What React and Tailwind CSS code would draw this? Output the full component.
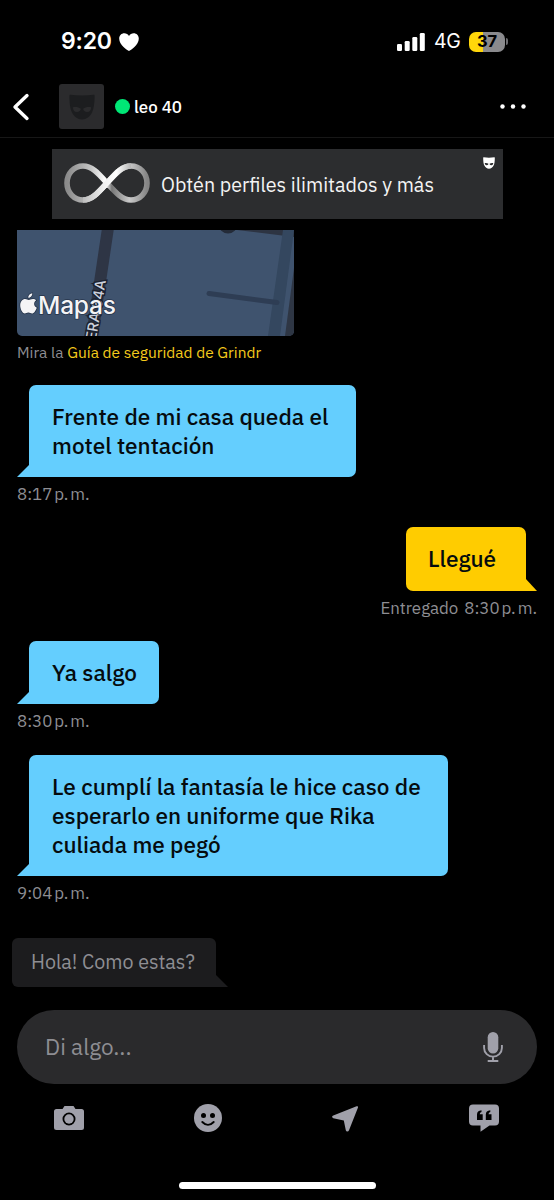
import React, { useState } from 'react'

const MESSAGES = [
  { id: 1, mine: false, lines: ['Frente de mi casa queda el', 'motel tentación'], time: '8:17\u202fp.\u202fm.', box: 'w-[327px] h-[91.5px]', slot: 'h-[142px]' },
  { id: 2, mine: true, lines: ['Llegué'], time: '8:30\u202fp.\u202fm.', status: 'Entregado', box: 'w-[120px] h-[63.5px]', slot: 'h-[114px]' },
  { id: 3, mine: false, lines: ['Ya salgo'], time: '8:30\u202fp.\u202fm.', box: 'w-[130px] h-[63px]', slot: 'h-[114px]' },
  { id: 4, mine: false, lines: ['Le cumplí la fantasía le hice caso de', 'esperarlo en uniforme que Rika', 'culiada me pegó'], time: '9:04\u202fp.\u202fm.', box: 'w-[419px] h-[121px]', slot: 'h-[150px]' },
]

function Mask({ className }) {
  return (
    <svg viewBox="0 0 26 26" className={className} fill="currentColor">
      <path
        fillRule="evenodd"
        d="M1.4.8Q13 2.400 24.6.8 25.6.6 25.6 2C25.6 9 24.8 15 23 18.5 21 22.500 17.500 25.500 13 25.500S5 22.500 3 18.500C1.200 15 .4 9 .4 2Q.4.6 1.400.8ZM3.800 13.200C4.300 17 6 18.300 8.400 17.900 10.800 17.500 11.600 16.500 11.800 14.800 9.600 13 7 12.500 3.800 13.200ZM22.200 13.200C19 12.500 16.400 13 14.200 14.800 14.400 16.500 15.200 17.500 17.600 17.900 20 18.300 21.700 17 22.200 13.200Z"
      />
    </svg>
  )
}

function StatusBar() {
  return (
    <div className="flex h-[80px] items-center pt-[3px] pl-[61px] pr-[46px] font-['Inter',sans-serif] text-white">
      <span className="w-[58px] text-[23px] font-semibold tracking-[-0.2px]">9:20</span>
      <svg viewBox="0 0 20 18" className="h-[18px] w-[20px]" fill="currentColor">
        <path d="M10 18C8.500 17.300.2 11.800.2 5.700.2 2.400 2.500.2 5.300.2 7.300.2 9 1.200 10 3 11 1.200 12.700.2 14.700.2c2.800 0 5.100 2.200 5.100 5.500C19.800 11.800 11.500 17.300 10 18Z" />
      </svg>
      <div className="ml-auto flex items-center">
        <svg viewBox="0 0 28 18" className="h-[18px] w-[28px]" fill="currentColor">
          <rect x="0" y="11" width="5" height="7" rx="1.300" />
          <rect x="7.700" y="8" width="5" height="10" rx="1.300" />
          <rect x="15.300" y="4" width="5" height="14" rx="1.300" />
          <rect x="22.800" y="0" width="5" height="18" rx="1.300" />
        </svg>
        <span className="ml-[9px] w-[35px] text-[19.5px] tracking-[-0.3px]">4G</span>
        <div className="flex h-[20px] w-[36px] items-center justify-center rounded-[7px] bg-[linear-gradient(90deg,#ffd60a_39%,#8a8a8d_39%)] text-[16.5px] font-bold text-black">
          37
        </div>
        <div className="ml-px h-[7px] w-[2px] rounded-r-full bg-[#6c6c70]" />
      </div>
    </div>
  )
}

function Header() {
  return (
    <header className="flex h-[58px] items-center border-b border-[#171717] pb-[4px] text-white">
      <svg viewBox="0 0 18 28" className="ml-[12px] h-[28px] w-[18px]" fill="none" stroke="currentColor" strokeWidth="3.400" strokeLinecap="round" strokeLinejoin="round">
        <path d="M15 2.600 3 14 15 25.400" />
      </svg>
      <div className="ml-[29px] flex h-[45px] w-[45px] items-center justify-center rounded-[3px] bg-[#2b2b2d]">
        <Mask className="h-[26px] w-[26px] text-[#1c1d1f]" />
      </div>
      <span className="ml-[11px] h-[15px] w-[15px] rounded-full bg-[#00e676]" />
      <span className="mt-[2px] ml-[4px] text-[16.9px] font-medium">leo 40</span>
      <svg viewBox="0 0 28 6" className="ml-auto mr-[27px] h-[6px] w-[28px]" fill="currentColor">
        <circle cx="3.500" cy="2.500" r="2.200" />
        <circle cx="14" cy="2.500" r="2.200" />
        <circle cx="24.500" cy="2.500" r="2.200" />
      </svg>
    </header>
  )
}

function Banner() {
  return (
    <div className="mt-[11px] ml-[52px] flex h-[70px] w-[451px] bg-[#2c2d2f]">
      <svg viewBox="0 0 86 40" className="mt-[14px] ml-[12px] h-[40px] w-[86px]" fill="none" strokeWidth="5.600">
        <defs>
          <linearGradient id="under" x1="0" x2="1">
            <stop offset="0" stopColor="#8b8b8b" />
            <stop offset="0.300" stopColor="#c4c4c4" />
            <stop offset="0.480" stopColor="#ffffff" />
            <stop offset="0.560" stopColor="#777777" />
            <stop offset="0.780" stopColor="#c9c9c9" />
            <stop offset="1" stopColor="#858585" />
          </linearGradient>
          <linearGradient id="over" x1="0" x2="1">
            <stop offset="0" stopColor="#bdbdbd" />
            <stop offset="0.450" stopColor="#f2f2f2" />
            <stop offset="0.700" stopColor="#ffffff" />
            <stop offset="1" stopColor="#b5b5b5" />
          </linearGradient>
        </defs>
        <path stroke="url(#under)" d="M43 20C34 10 28 3 19 3 10 3 3 10.500 3 20s7 17 16 17c9 0 15-7 24-17S58 3 67 3s16 7.500 16 17-7 17-16 17c-9 0-15-7-24-17Z" />
        <path stroke="url(#over)" d="M19 37c9 0 15-7 24-17S58 3 67 3" />
      </svg>
      <span className="ml-[11px] mt-px self-center whitespace-nowrap text-[19.7px] leading-[24px] text-[#f4f4f4]">Obtén perfiles ilimitados y más</span>
      <Mask className="ml-auto mt-[8px] mr-[8px] h-[12px] w-[12px] text-white" />
    </div>
  )
}

function MapPreview() {
  return (
    <div className="relative mt-[11px] ml-[17px] h-[106px] w-[277px] overflow-hidden rounded-b-[5px] bg-[#3f536e]">
      <svg viewBox="0 0 277 106" className="h-full w-full">
        <path d="M85-2H97L81 106H69Z" fill="#2e3545" />
        <path d="M220 0 277 7V0Z" fill="#2d3442" />
        <circle cx="211" cy="-6" r="9.500" fill="#242b38" />
        <path d="M266 0H277L263 106H251Z" fill="#34475f" />
        <path d="M192 63.500 260 72.500" stroke="#2e3d54" strokeWidth="5" strokeLinecap="round" />
        <path d="M277 38V106H268Z" fill="#2e3644" />
        <text x="0" y="0" transform="translate(78.700 111) rotate(-80.300)" fontFamily="Inter, sans-serif" fontSize="14.500" fontWeight="500" fill="#cbd0dc" stroke="#1c2230" strokeWidth="3" paintOrder="stroke">ERA 64A</text>
      </svg>
      <div className="absolute top-[61px] left-[3px] flex items-center">
        <svg viewBox="0 0 17 21" className="h-[21px] w-[17px] -mt-[4px] overflow-visible" fill="#f4f4f6" stroke="#26344a" strokeWidth="1.500" paintOrder="stroke">
          <path d="M12.300.2c.1 2.500-1.800 4.600-4 4.600C8 2.500 10 .4 12.300.2ZM16.200 7.300c-3 1.800-2.600 6.100.6 7.400C15.800 17.500 14 20.500 12 20.500c-1.500 0-1.900-.9-3.600-.9s-2.200.9-3.600.9C2.300 20.500.2 16 .2 12.300c0-3.800 2.300-6.300 5-6.300 1.500 0 2.500.9 3.600.9 1 0 2.200-1 4.100-1 1.200 0 2.500.5 3.300 1.400Z" />
        </svg>
        <span className="ml-[1px] font-['Inter',sans-serif] text-[24.5px] leading-[28px] font-medium tracking-[-0.2px] text-[#f4f4f6] [paint-order:stroke] [-webkit-text-stroke:1.5px_#26344a]">Mapas</span>
      </div>
    </div>
  )
}

function Tail({ mine }) {
  return (
    <svg viewBox="0 0 13 13" className={mine ? 'h-[13px] w-[12px] -ml-px text-[#ffcc00]' : 'h-[13px] w-[13px] -mr-px text-[#64cefe]'} fill="currentColor" preserveAspectRatio="none">
      <path d={mine ? 'M0 0 13 13H0Z' : 'M13 0V13H0Z'} />
    </svg>
  )
}

function Message({ msg }) {
  return (
    <div className={`flex shrink-0 flex-col ${msg.slot} ${msg.mine ? 'items-end' : 'items-start'}`}>
      <div className="flex items-end">
        {!msg.mine && <Tail />}
        <div
          className={`flex flex-col justify-center whitespace-nowrap text-[22.56px] leading-[29px] font-medium text-[#050b0e] ${msg.box} ${
            msg.mine ? 'rounded-[7px] rounded-br-none bg-[#ffcc00] pl-[22px]' : 'rounded-[7px] rounded-bl-none bg-[#64cefe] pl-[23px]'
          }`}
        >
          {msg.lines.map(line => <div key={line}>{line}</div>)}
        </div>
        {msg.mine && <Tail mine />}
      </div>
      <div className="mt-[7px] flex gap-[6px] text-[16.9px] leading-[20px] text-[#8e8e93]">
        {msg.status && <span>{msg.status}</span>}
        <span>{msg.time}</span>
      </div>
    </div>
  )
}

function Toolbar() {
  return (
    <nav className="mt-[19px] flex text-[#a0a0aa]">
      <button className="ml-[54px]" aria-label="Cámara">
        <svg viewBox="0 0 30 28" className="h-[28px] w-[30px]" fill="currentColor">
          <path fillRule="evenodd" d="M10.500 2h9l2 3H27.500Q30 5 30 7.500V23.500Q30 26 27.500 26H2.500Q0 26 0 23.500V7.500Q0 5 2.500 5H8.500ZM15 8.500a6.500 6.500 0 1 0 0 13 6.500 6.500 0 0 0 0-13Z" />
          <circle cx="15" cy="15" r="4.700" />
        </svg>
      </button>
      <button className="ml-[110px]" aria-label="Stickers">
        <svg viewBox="0 0 28 28" className="h-[28px] w-[28px]">
          <circle cx="14" cy="14" r="14" fill="currentColor" />
          <circle cx="9.500" cy="11.500" r="2.500" fill="#000" />
          <circle cx="18.500" cy="11.500" r="2.500" fill="#000" />
          <path d="M8.300 18Q14 23.800 19.700 18" stroke="#000" strokeWidth="1.900" strokeLinecap="round" fill="none" />
        </svg>
      </button>
      <button className="ml-[110px]" aria-label="Ubicación">
        <svg viewBox="0 0 26 28" className="h-[28px] w-[26px]" fill="currentColor">
          <path d="M24.600 2.200Q26.400 1.800 26 3.600L17 26.300Q16.500 27.500 15.300 27.500 14.200 27.500 13.800 26.200L11.800 16.600 1.300 14.200Q0 13.800.1 12.700.2 11.900 1.300 11.400Z" />
        </svg>
      </button>
      <button className="ml-[111px]" aria-label="Frases guardadas">
        <svg viewBox="0 0 30 29" className="h-[29px] w-[30px]">
          <path fill="currentColor" d="M4 1.500H26Q30 1.500 30 5.500V18.500Q30 22.500 26 22.500H20.500L11.500 28.800V22.500H4Q0 22.500 0 18.500V5.500Q0 1.500 4 1.500Z" />
          <path fill="#000" d="M8 17V11.500Q8 7.700 12.500 7.200V9Q10.800 9.500 10.700 11.300H13.700V17ZM16.800 17V11.500Q16.800 7.700 21.300 7.200V9Q19.600 9.500 19.500 11.300H22.500V17Z" />
        </svg>
      </button>
    </nav>
  )
}

export default function App() {
  const [draft, setDraft] = useState('')

  return (
    <div className="flex h-[1200px] w-[554px] flex-col overflow-hidden bg-black font-['IBM_Plex_Sans',Roboto,sans-serif]">
      <StatusBar />
      <Header />
      <Banner />
      <MapPreview />
      <p className="mt-[6px] ml-[17px] text-[15.5px] leading-[20px] text-[#8e8e93]">
        Mira la <a className="text-[#f5cb1c]">Guía de seguridad de Grindr</a>
      </p>

      {/* Conversation */}
      <main className="mt-[23px] flex h-[553px] flex-col px-[17px]">
        {MESSAGES.map(msg => <Message key={msg.id} msg={msg} />)}
      </main>

      {/* Suggested reply */}
      <div className="ml-[12px] flex items-end">
        <button className="h-[49px] w-[204px] rounded-[6px] rounded-br-none bg-[#1c1c1e] pb-[2px] pl-[19px] text-left text-[19.7px] text-[#8e8e93]">Hola! Como estas?</button>
        <svg viewBox="0 0 12 12" className="h-[12px] w-[12px]" fill="#1c1c1e">
          <path d="M0 0 12 12H0Z" />
        </svg>
      </div>

      {/* Composer */}
      <div className="mx-[17px] mt-[23px] flex h-[74px] items-center rounded-full bg-[#2a2a2c] pr-[34px] pl-[28px]">
        <input
          className="min-w-0 flex-1 text-[22.56px] text-white outline-none placeholder:text-[#8e8e93]"
          value={draft}
          onChange={e => setDraft(e.target.value)}
          placeholder="Di algo..."
        />
        <svg viewBox="0 0 20 30" className="h-[30px] w-[20px]" fill="none" stroke="#a0a0aa" strokeWidth="1.900">
          <rect x="4.700" y="0" width="10.600" height="21.500" rx="5.300" fill="#a0a0aa" stroke="none" />
          <path d="M1.100 13V16A8.900 8.600 0 0 0 18.900 16V13M10 24.500V29M4.700 29H15.300" />
        </svg>
      </div>

      <Toolbar />
      <div className="mt-auto mb-[11px] ml-[179px] h-[7px] w-[197px] rounded-full bg-white" />
    </div>
  )
}
